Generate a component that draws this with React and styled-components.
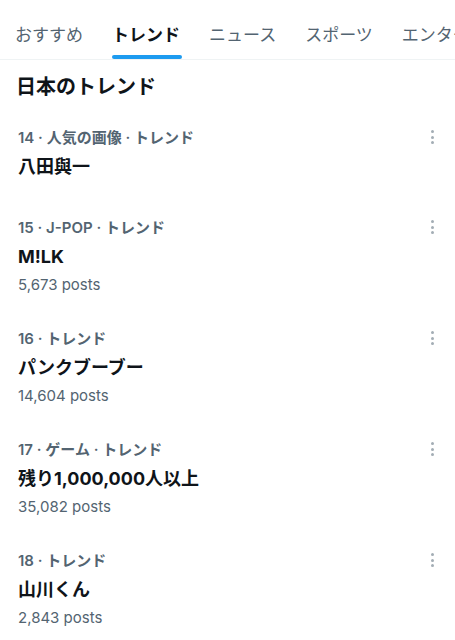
import styled, { createGlobalStyle } from "styled-components";

const GlobalStyle = createGlobalStyle`
    body {
        margin: 0;
        background: #ffffff;
        font-family: Inter, "Noto Sans CJK JP", sans-serif;
        color: #0f1419;
    }
`

const Page = styled.div`
    width: 455px;
    height: 640px;
    overflow: hidden;
    background: #ffffff;
`

const TabBar = styled.nav`
    display: flex;
    height: 59px;
    padding-left: 15px;
    gap: 29px;
    border-bottom: 1px solid #eff3f4;
    white-space: nowrap;
    overflow: hidden;
`

const Tab = styled.div`
    position: relative;
    display: flex;
    align-items: center;
    padding-top: 8px;
    font-size: 17px;
    font-weight: ${props => props.$active ? 700 : 400};
    color: ${props => props.$active ? "#0f1419" : "#536471"};

    &::after {
        content: "";
        display: ${props => props.$active ? "block" : "none"};
        position: absolute;
        left: 0;
        right: -2px;
        bottom: 0;
        height: 4px;
        border-radius: 2px;
        background: #1d9bf0;
    }
`

const Heading = styled.h2`
    margin: 0;
    padding: 13px 16px 15px;
    font-size: 20px;
    line-height: 28px;
    font-weight: 700;
`

const Item = styled.div`
    position: relative;
    padding: 12px 16px ${props => props.$noPosts ? "27px" : "22px"} 18px;
`

const Meta = styled.div`
    font-size: 15px;
    line-height: 20px;
    font-weight: 600;
    color: #536471;
`

const Title = styled.div`
    margin-top: 7px;
    font-size: 18px;
    line-height: 24px;
    font-weight: 700;
`

const Posts = styled.div`
    margin-top: 6px;
    font-size: 15px;
    line-height: 20px;
    color: #536471;
`

const More = styled.div`
    position: absolute;
    top: 14px;
    right: 21px;
    display: flex;
    flex-direction: column;
    gap: 2.5px;

    span {
        width: 3px;
        height: 3px;
        border-radius: 50%;
        background: #a3adb5;
    }
`

const tabs = ["おすすめ", "トレンド", "ニュース", "スポーツ", "エンターテイメント"];

const trends = [
    { meta: "14 · 人気の画像 · トレンド", title: "八田與一" },
    { meta: "15 · J-POP · トレンド", title: "M!LK", posts: "5,673 posts" },
    { meta: "16 · トレンド", title: "パンクブーブー", posts: "14,604 posts" },
    { meta: "17 · ゲーム · トレンド", title: "残り1,000,000人以上", posts: "35,082 posts" },
    { meta: "18 · トレンド", title: "山川くん", posts: "2,843 posts" },
];

export default function App() {
    return (
        <Page>
            <GlobalStyle />
            <TabBar>
                {tabs.map(t => (
                    <Tab key={t} $active={t === "トレンド"}>{t}</Tab>
                ))}
            </TabBar>
            <Heading>日本のトレンド</Heading>
            {trends.map(item => (
                <Item key={item.meta} $noPosts={!item.posts}>
                    <Meta>{item.meta}</Meta>
                    <Title>{item.title}</Title>
                    {item.posts && <Posts>{item.posts}</Posts>}
                    <More><span /><span /><span /></More>
                </Item>
            ))}
        </Page>
    )
}
